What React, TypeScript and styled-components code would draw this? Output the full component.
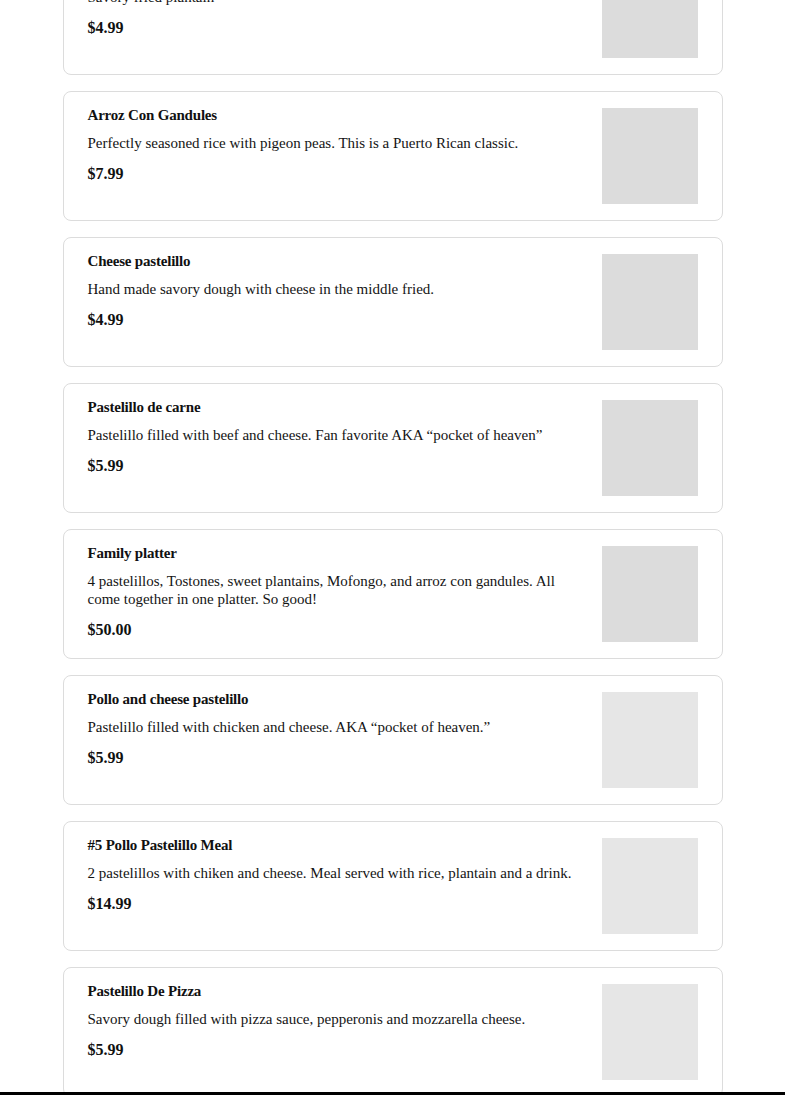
import React, { ReactElement } from "react";
import styled, { createGlobalStyle } from "styled-components";

type MenuItem = {
    name: string
    description: string
    price: string
    loaded: boolean
}

const items: MenuItem[] = [
    { name: "Tostones", description: "Savory fried plantain", price: "$4.99", loaded: true },
    { name: "Arroz Con Gandules", description: "Perfectly seasoned rice with pigeon peas. This is a Puerto Rican classic.", price: "$7.99", loaded: true },
    { name: "Cheese pastelillo", description: "Hand made savory dough with cheese in the middle fried.", price: "$4.99", loaded: true },
    { name: "Pastelillo de carne", description: "Pastelillo filled with beef and cheese. Fan favorite AKA \u201cpocket of heaven\u201d", price: "$5.99", loaded: true },
    { name: "Family platter", description: "4 pastelillos, Tostones, sweet plantains, Mofongo, and arroz con gandules. All come together in one platter. So good!", price: "$50.00", loaded: true },
    { name: "Pollo and cheese pastelillo", description: "Pastelillo filled with chicken and cheese. AKA \u201cpocket of heaven.\u201d", price: "$5.99", loaded: false },
    { name: "#5 Pollo Pastelillo Meal", description: "2 pastelillos with chiken and cheese. Meal served with rice, plantain and a drink.", price: "$14.99", loaded: false },
    { name: "Pastelillo De Pizza", description: "Savory dough filled with pizza sauce, pepperonis and mozzarella cheese.", price: "$5.99", loaded: false },
];

const GlobalStyle = createGlobalStyle`
    html, body {
        margin: 0;
        padding: 0;
        background: #ffffff;
        overflow: hidden;
    }
`;

const Page = styled.div`
    height: 1095px;
    overflow: hidden;
`;

// scrolled part way down the menu
const MenuList = styled.div`
    width: 660px;
    margin: -55px auto 0;
    display: flex;
    flex-direction: column;
    gap: 16px;
`;

const Card = styled.div`
    display: flex;
    justify-content: space-between;
    gap: 16px;
    height: 130px;
    box-sizing: border-box;
    padding: 16px 24px;
    border: 1px solid #dcdcdc;
    border-radius: 8px;
    background: #ffffff;
`;

const Info = styled.div`
    display: flex;
    flex-direction: column;
    min-width: 0;
`;

const Title = styled.h3`
    margin: 0 0 12px;
    font-family: "Liberation Serif", "DejaVu Serif", serif;
    font-weight: 700;
    font-size: 15px;
    line-height: 14px;
    letter-spacing: -0.2px;
    color: #111111;
`;

const Description = styled.p`
    margin: 0 0 13px;
    font-family: "Liberation Serif", "DejaVu Serif", serif;
    font-size: 15px;
    line-height: 18px;
    color: #141414;
`;

const Price = styled.span`
    font-family: "Liberation Serif", "DejaVu Serif", serif;
    font-weight: 700;
    font-size: 16px;
    line-height: 18px;
    color: #111111;
`;

const Thumb = styled.div<{ loaded: boolean }>`
    flex: 0 0 96px;
    width: 96px;
    height: 96px;
    background: ${props => props.loaded ? "#dcdcdc" : "#e6e6e6"};
`;

const BottomEdge = styled.div`
    position: fixed;
    left: 0;
    right: 0;
    bottom: 0;
    height: 3px;
    background: #000000;
`;

const MenuCard = ({ item }: { item: MenuItem }): ReactElement => (
    <Card>
        <Info>
            <Title>{item.name}</Title>
            <Description>{item.description}</Description>
            <Price>{item.price}</Price>
        </Info>
        <Thumb loaded={item.loaded} />
    </Card>
);

export default function App(): ReactElement {
    return (
        <>
            <GlobalStyle />
            <Page>
                <MenuList>
                    {items.map(item => <MenuCard key={item.name} item={item} />)}
                </MenuList>
            </Page>
            <BottomEdge />
        </>
    );
}
